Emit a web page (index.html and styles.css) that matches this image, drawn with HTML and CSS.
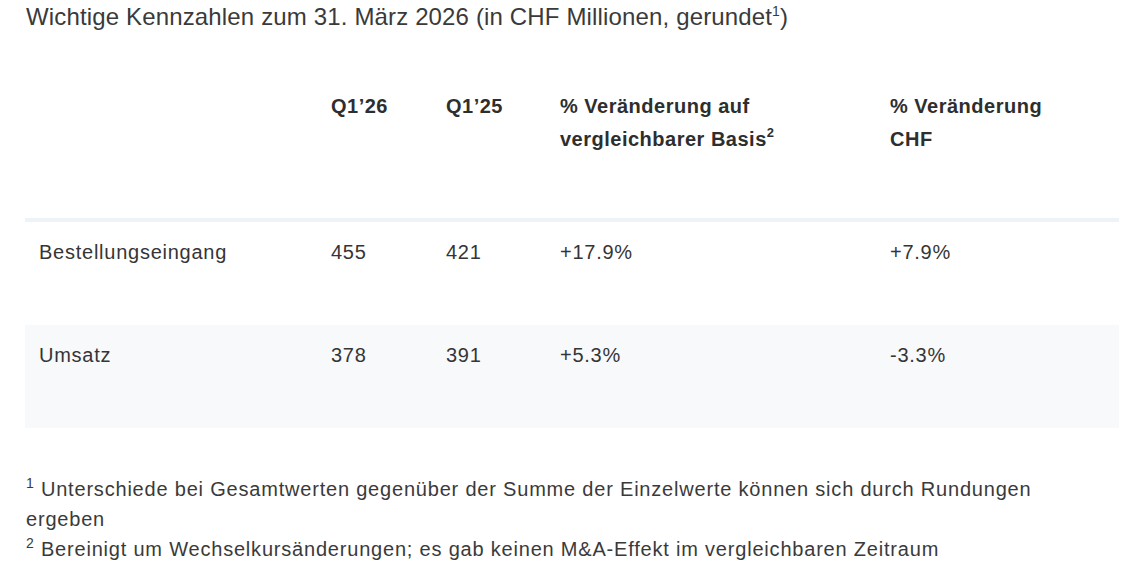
FILE: index.html
```html
<!DOCTYPE html>
<html lang="de">
<head>
<meta charset="utf-8">
<link rel="stylesheet" href="styles.css">
</head>
<body>
<div class="page">
  <h2 class="title">Wichtige Kennzahlen zum 31. März 2026 (in CHF Millionen, gerundet<sup>1</sup>)</h2>
  <table class="figures">
    <colgroup>
      <col class="c-label">
      <col class="c-q26">
      <col class="c-q25">
      <col class="c-comp">
      <col class="c-chf">
    </colgroup>
    <thead>
      <tr>
        <th></th>
        <th>Q1’26</th>
        <th>Q1’25</th>
        <th>% Veränderung auf vergleichbarer Basis<sup>2</sup></th>
        <th>% Veränderung CHF</th>
      </tr>
    </thead>
    <tbody>
      <tr>
        <td>Bestellungseingang</td>
        <td>455</td>
        <td>421</td>
        <td>+17.9%</td>
        <td>+7.9%</td>
      </tr>
      <tr class="alt">
        <td>Umsatz</td>
        <td>378</td>
        <td>391</td>
        <td>+5.3%</td>
        <td>-3.3%</td>
      </tr>
    </tbody>
  </table>
  <div class="notes">
    <p><sup>1</sup> Unterschiede bei Gesamtwerten gegenüber der Summe der Einzelwerte können sich durch Rundungen ergeben</p>
    <p><sup>2</sup> Bereinigt um Wechselkursänderungen; es gab keinen M&amp;A-Effekt im vergleichbaren Zeitraum</p>
  </div>
</div>
</body>
</html>
```

FILE: styles.css
```css
html, body {
  margin: 0;
  padding: 0;
  background: #ffffff;
}

body {
  font-family: "Liberation Sans", Arial, sans-serif;
  color: #333333;
}

.page {
  padding: 0 7px 0 26px;
}

.title {
  margin: 0;
  font-size: 24px;
  font-weight: 400;
  line-height: 33px;
  letter-spacing: 0.15px;
  color: #3a3a3a;
}

.title sup {
  font-size: 14px;
  line-height: 0;
  vertical-align: 9px;
}

.figures {
  width: 1094px;
  margin: 57px 0 0 -1px;
  border-collapse: collapse;
  table-layout: fixed;
}

.c-label { width: 292px; }
.c-q26 { width: 115px; }
.c-q25 { width: 114px; }
.c-comp { width: 330px; }
.c-chf { width: auto; }

.figures th {
  text-align: left;
  vertical-align: top;
  font-size: 20px;
  font-weight: 700;
  line-height: 33px;
  letter-spacing: 0.5px;
  color: #2e2e2e;
  padding: 0 40px 62px 14px;
  border-bottom: 4px solid #eef3f7;
}

.figures th sup {
  font-size: 13px;
  line-height: 0;
  vertical-align: 9px;
}

.figures td {
  text-align: left;
  vertical-align: top;
  font-size: 20px;
  line-height: 24px;
  letter-spacing: 0.75px;
  color: #353535;
  padding: 18px 14px 61px 14px;
}

.figures tr.alt td {
  background: #f8f9fb;
}

.notes {
  max-width: 1060px;
  margin-top: 46px;
  font-size: 20px;
  line-height: 30px;
  letter-spacing: 0.8px;
  color: #3a3a3a;
}

.notes p {
  margin: 0;
}

.notes sup {
  font-size: 14px;
  line-height: 0;
  vertical-align: 8px;
}
```
